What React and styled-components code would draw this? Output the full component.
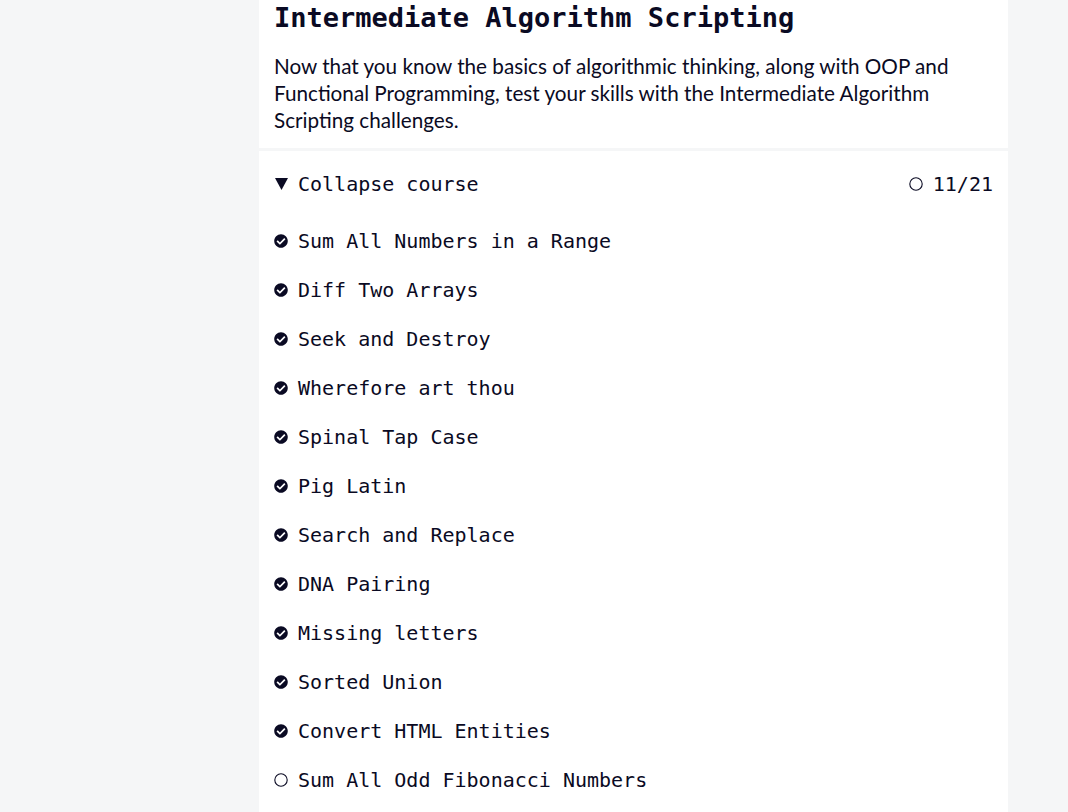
import React from 'react';
import styled, { createGlobalStyle } from 'styled-components';
import { FaCheckCircle } from 'react-icons/fa';

const GlobalStyle = createGlobalStyle`
  html, body {
    margin: 0;
    padding: 0;
    background: #f5f6f7;
    color: #0a0a23;
  }
`;

const Page = styled.div`
  display: flex;
  height: 812px;
  overflow: hidden;
  padding-left: 259px;
`;

const Card = styled.div`
  width: 749px;
  background: #ffffff;
`;

const Intro = styled.div`
  padding: 2px 15px 14px;
  border-bottom: 3px solid #f5f6f7;
`;

const Title = styled.h2`
  margin: 0;
  font-family: 'DejaVu Sans Mono', 'Liberation Mono', monospace;
  font-weight: 700;
  font-size: 27px;
  line-height: 1.2;
`;

const Description = styled.p`
  margin: 19px 0 0;
  font-family: Lato, 'Noto Sans', sans-serif;
  font-size: 20.7px;
  line-height: 27px;
`;

const Course = styled.div`
  padding: 8px 15px 0;
  font-family: 'DejaVu Sans Mono', 'Liberation Mono', monospace;
  font-size: 20px;
`;

const Row = styled.div`
  display: flex;
  align-items: center;
  justify-content: space-between;
  height: 49px;
  margin-bottom: ${(p) => (p.$head ? '8px' : '0')};
`;

const Label = styled.span`
  display: flex;
  align-items: center;
  gap: 10px;
`;

const IconBox = styled.span`
  display: inline-flex;
  width: 14px;
  justify-content: center;
  svg {
    display: block;
  }
`;

const Triangle = () => (
  <svg width="13" height="12" viewBox="0 0 13 12">
    <polygon points="0,0 13,0 6.5,12" fill="#0a0a23" />
  </svg>
);

const Ring = () => (
  <svg width="14" height="14" viewBox="0 0 14 14">
    <circle cx="7" cy="7" r="6.2" fill="none" stroke="#0a0a23" strokeWidth="1.1" />
  </svg>
);

const challenges = [
  ['Sum All Numbers in a Range', true],
  ['Diff Two Arrays', true],
  ['Seek and Destroy', true],
  ['Wherefore art thou', true],
  ['Spinal Tap Case', true],
  ['Pig Latin', true],
  ['Search and Replace', true],
  ['DNA Pairing', true],
  ['Missing letters', true],
  ['Sorted Union', true],
  ['Convert HTML Entities', true],
  ['Sum All Odd Fibonacci Numbers', false],
];

export default function App() {
  return (
    <>
      <GlobalStyle />
      <Page>
        <Card>
          <Intro>
            <Title>Intermediate Algorithm Scripting</Title>
            <Description>
              Now that you know the basics of algorithmic thinking, along with OOP and
              Functional Programming, test your skills with the Intermediate Algorithm
              Scripting challenges.
            </Description>
          </Intro>
          <Course>
            <Row $head>
              <Label>
                <IconBox><Triangle /></IconBox>
                Collapse course
              </Label>
              <Label>
                <IconBox><Ring /></IconBox>
                11/21
              </Label>
            </Row>
            {challenges.map(([name, done]) => (
              <Row key={name}>
                <Label>
                  <IconBox>{done ? <FaCheckCircle size={14} /> : <Ring />}</IconBox>
                  {name}
                </Label>
              </Row>
            ))}
          </Course>
        </Card>
      </Page>
    </>
  );
}
